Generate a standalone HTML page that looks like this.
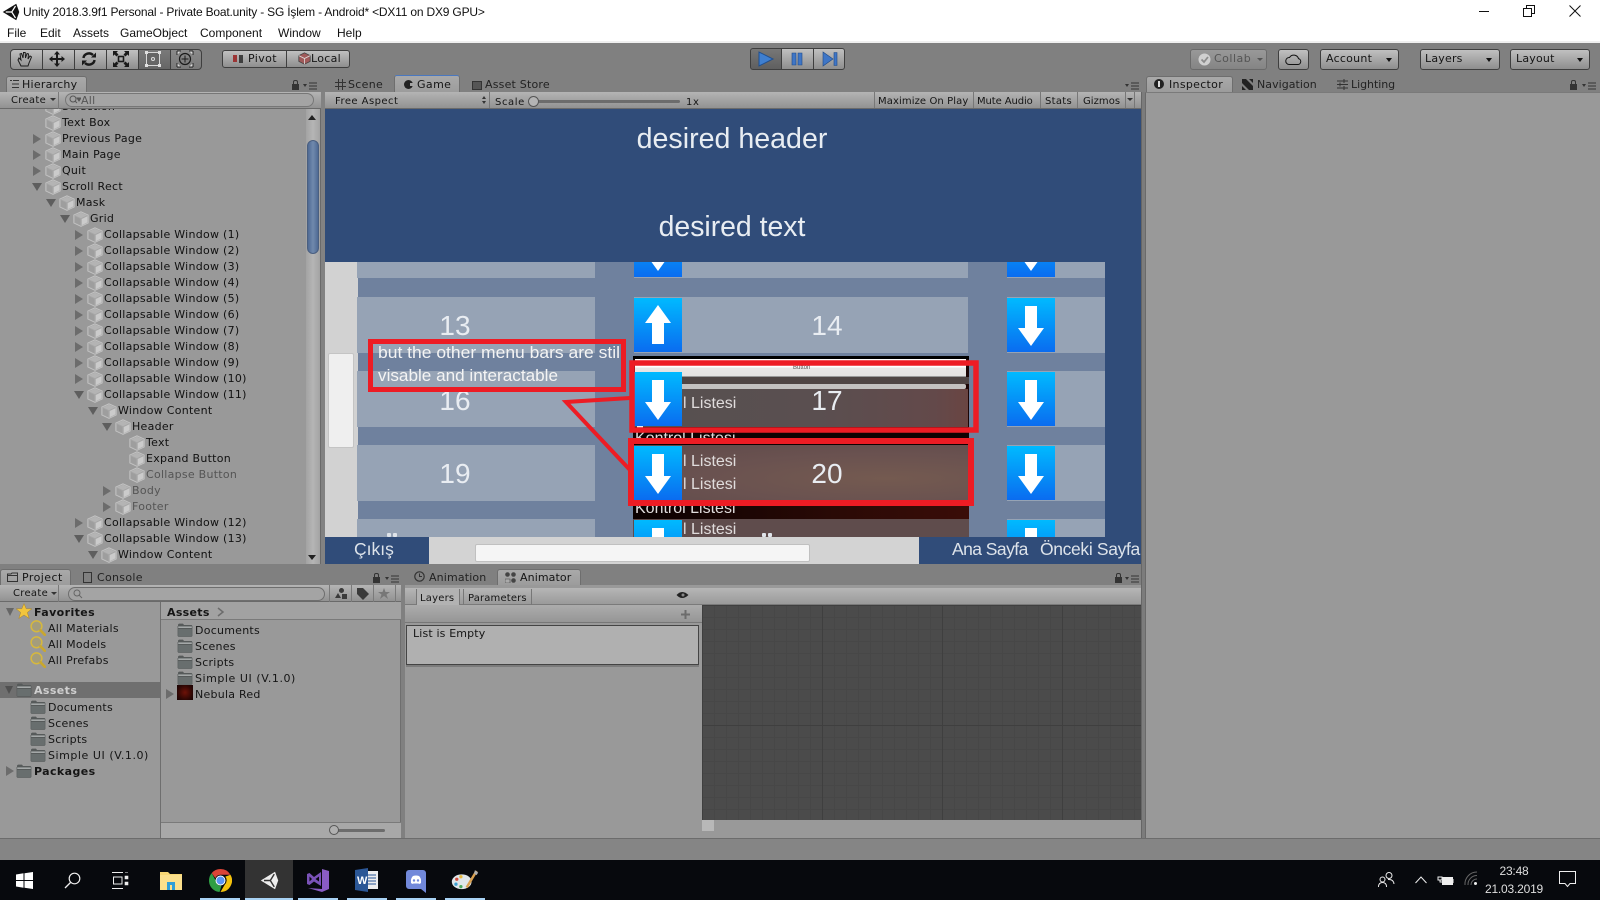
<!DOCTYPE html>
<html><head><meta charset="utf-8"><title>Unity</title>
<style>
html,body{margin:0;padding:0;background:#808080}
#p{position:relative;width:1600px;height:900px;overflow:hidden;background:#808080;font-family:"DejaVu Sans","Liberation Sans",sans-serif;font-size:11px;color:#151515}
#p div,#p svg,#p span{position:absolute;box-sizing:border-box}
.x{white-space:nowrap;line-height:16px;height:16px;margin-top:1px;letter-spacing:.25px}
.w{font-family:"Liberation Sans",sans-serif;font-size:12px;color:#111;margin-top:0;letter-spacing:0}
.r{white-space:nowrap;line-height:16px;height:16px;padding-left:17px;color:#111;margin-top:1px;letter-spacing:.27px}
.r svg{left:0;top:0;width:16px;height:16px}
.g{color:#555}
i.ar,i.ad{position:absolute;width:0;height:0;display:block}
i.ar{left:-12px;top:3px;border-left:8px solid #6c6c6c;border-top:5px solid transparent;border-bottom:5px solid transparent}
i.ad{left:-13px;top:4px;border-top:8px solid #5e5e5e;border-left:5px solid transparent;border-right:5px solid transparent}
.b{background:linear-gradient(#c0c0c0,#8e8e8e);border:1px solid #3f3f3f}
.tab{background:linear-gradient(#a9a9a9,#9c9c9c);border:1px solid #6e6e6e;border-bottom:0;border-radius:3px 3px 0 0}
.tb{background:linear-gradient(#b4b4b4,#929292);border-bottom:1px solid #6a6a6a}
.cell{background:#96a3b5}
.num{color:#e9edf2;font-family:"Liberation Sans",sans-serif;font-size:28px;line-height:34px;height:34px;text-align:center;white-space:nowrap;margin-top:1px}
.btn{width:48px;height:54px;background:linear-gradient(#00baff,#0a6cf0)}
.btn svg{left:0;top:0;width:48px;height:54px}
.li{font-family:"Liberation Sans",sans-serif;font-size:16px;color:#e0dcdc;line-height:20px;height:20px;white-space:nowrap;margin-top:1px}
.bt{font-family:"Liberation Sans",sans-serif;font-size:17.5px;color:#dde3ea;line-height:22px;height:22px;white-space:nowrap}
.ul{top:898px;height:2px;background:#a8d2f4}
.dot{width:4px;height:4px;background:#dfe4ea;border-radius:1px}
</style></head><body>
<div id="p">
<svg width="0" height="0" style="left:0;top:0"><defs>
<symbol id="cube" viewBox="0 0 16 16"><path d="M8 .8 15.200 4V12L8 15.400 .8 12V4Z" fill="#a6a6a6" stroke="#c4c4c4" stroke-width=".9"/><path d="M8 1.800 14 4.400 8 7.200 2 4.400Z" fill="#b4b4b4"/><path d="M8.700 8 14.400 5.300V11.400L8.700 14.200Z" fill="#cbcbcb"/><path d="M2 5.300 7.300 8V14.200L2 11.400Z" fill="#9e9e9e"/></symbol>
<symbol id="fold" viewBox="0 0 16 14"><path d="M1 3V1.500L2 .6H6L7 2H14.600L15.400 3V13L14.600 13.800H1.400L.6 13V3Z" fill="#565a5a"/><path d="M1.200 3.400H14.800V5H1.200Z" fill="#a4a8a8"/><path d="M1.200 6H14.800V13H1.200Z" fill="#686e6e"/></symbol>
<symbol id="mag" viewBox="0 0 16 16"><circle cx="6.500" cy="6.300" r="5.400" fill="#a49d7c" stroke="#d6b83e" stroke-width="1.500"/><path d="M10.500 10.300 14.800 14.800" stroke="#c9a72e" stroke-width="2.600" stroke-linecap="round"/></symbol>
<symbol id="down" viewBox="0 0 48 54"><path d="M18 8H30V30H37L24 48 11 30H18Z" fill="#fff"/></symbol>
<symbol id="up" viewBox="0 0 48 54"><path d="M24 7 37 25H30V46H18V25H11Z" fill="#fff"/></symbol>
</defs></svg>

<!-- title -->
<div style="left:0;top:0;width:1600px;height:41px;background:#fff"></div>
<div style="left:0;top:41px;width:1600px;height:2px;background:#efefef"></div>
<svg style="left:2px;top:3px" width="18" height="18" viewBox="0 0 24 24"><path d="M1 12 19 1 23 12 19 23Z" fill="#111"/><path d="M13 12H5M13 12 18 4M13 12 18 20" stroke="#fff" stroke-width="1.600"/></svg>
<div class="x w" style="left:23px;top:4px;letter-spacing:-.19px">Unity 2018.3.9f1 Personal - Private Boat.unity - SG İşlem - Android* &lt;DX11 on DX9 GPU&gt;</div>
<div class="x w" style="left:7px;top:25px">File</div>
<div class="x w" style="left:40px;top:25px">Edit</div>
<div class="x w" style="left:73px;top:25px">Assets</div>
<div class="x w" style="left:120px;top:25px">GameObject</div>
<div class="x w" style="left:200px;top:25px">Component</div>
<div class="x w" style="left:278px;top:25px">Window</div>
<div class="x w" style="left:337px;top:25px">Help</div>
<div style="left:1479px;top:11px;width:10px;height:1px;background:#111"></div>
<svg style="left:1523px;top:5px" width="12" height="12" viewBox="0 0 12 12"><path d="M.5 3.500H8.500V11.500H.5ZM3.500 3.500V.5H11.500V8.500H8.500" fill="none" stroke="#111"/></svg>
<svg style="left:1569px;top:5px" width="12" height="12" viewBox="0 0 12 12"><path d="M.5.5 11.500 11.500M11.500.5.5 11.500" stroke="#111" fill="none"/></svg>

<!-- toolbar tools -->
<div class="b" style="left:10px;top:49px;width:33px;height:21px;border-radius:4px 0 0 4px"></div>
<div class="b" style="left:42px;top:49px;width:33px;height:21px"></div>
<div class="b" style="left:74px;top:49px;width:33px;height:21px"></div>
<div class="b" style="left:106px;top:49px;width:33px;height:21px"></div>
<div style="left:138px;top:49px;width:33px;height:21px;background:linear-gradient(#7a7a7a,#666);border:1px solid #3f3f3f"></div>
<div style="left:170px;top:49px;width:32px;height:21px;background:linear-gradient(#8a8a8a,#7a7a7a);border:1px solid #3f3f3f;border-radius:0 4px 4px 0"></div>
<svg style="left:16px;top:50px" width="18" height="18" viewBox="0 0 18 18"><path d="M5 16 2 10 3 8 5 10 4 4 5.500 3.500 7 8 7.500 2.500 9.200 2.500 9.500 8 11 3.500 12.500 4 12 9 14 6 15.500 7 13 13 12 16Z" fill="none" stroke="#1c1c1c" stroke-width="1"/></svg>
<svg style="left:48px;top:50px" width="18" height="18" viewBox="0 0 18 18"><path d="M9 1 12 4.500H10V8H13.500V6L17 9 13.500 12V10H10V13.500H12L9 17 6 13.500H8V10H4.500V12L1 9 4.500 6V8H8V4.500H6Z" fill="#1a1a1a"/></svg>
<svg style="left:80px;top:50px" width="18" height="18" viewBox="0 0 18 18"><path d="M3.500 8A5.500 5 0 0 1 13 5M14.500 10A5.500 5 0 0 1 5 13" fill="none" stroke="#1a1a1a" stroke-width="2.400"/><path d="M11 7.500H16V2.500ZM7 10.500H2V15.500Z" fill="#1a1a1a"/></svg>
<svg style="left:112px;top:50px" width="18" height="18" viewBox="0 0 18 18"><path d="M1 1H6L4.500 2.500 6.500 4.500 4.500 6.500 2.500 4.500 1 6ZM17 1V6L15.500 4.500 13.500 6.500 11.500 4.500 13.500 2.500 12 1ZM1 17V12L2.500 13.500 4.500 11.500 6.500 13.500 4.500 15.500 6 17ZM17 17H12L13.500 15.500 11.500 13.500 13.500 11.500 15.500 13.500 17 12Z" fill="#1a1a1a"/><rect x="6.500" y="6.500" width="5" height="5" fill="none" stroke="#1a1a1a" stroke-width="1.600"/></svg>
<svg style="left:144px;top:50px" width="18" height="18" viewBox="0 0 18 18"><rect x="2.500" y="2.500" width="13" height="13" fill="#666" stroke="#d8d8d8"/><path d="M1 1h3v3H1zM14 1h3v3h-3zM1 14h3v3H1zM14 14h3v3h-3z" fill="#e0e0e0"/><circle cx="9" cy="9" r="1.500" fill="none" stroke="#ddd"/></svg>
<svg style="left:176px;top:50px" width="18" height="18" viewBox="0 0 18 18"><circle cx="9" cy="9" r="5.500" fill="none" stroke="#1a1a1a" stroke-width="1.200"/><path d="M9 5.500V12.500M5.500 9H12.500" stroke="#1a1a1a"/><path d="M1 1H5L1 5ZM17 1V5L13 1ZM1 17V13L5 17ZM17 17H13L17 13Z" fill="#ddd"/><path d="M1 1H5M1 1V5M17 1H13M17 1V5M1 17H5M1 17V13M17 17H13M17 17V13" stroke="#222"/></svg>

<div class="b" style="left:222px;top:50px;width:65px;height:18px;border-radius:3px 0 0 3px"></div>
<div class="b" style="left:286px;top:50px;width:64px;height:18px;border-radius:0 3px 3px 0"></div>
<div style="left:233px;top:55px;width:4px;height:7px;background:#9c3535"></div>
<div style="left:239px;top:55px;width:4px;height:8px;background:#3e3e3e"></div>
<div class="x" style="left:248px;top:50px;letter-spacing:.4px">Pivot</div>
<svg style="left:298px;top:52px" width="13" height="13" viewBox="0 0 16 16"><path d="M8 1 15 4.500V11.500L8 15 1 11.500V4.500Z" fill="#a05a5a" stroke="#444"/><path d="M1 4.500 8 8 15 4.500M8 8V15" stroke="#ddd" fill="none"/></svg>
<div class="x" style="left:311px;top:50px;letter-spacing:.3px">Local</div>

<!-- playback -->
<div style="left:750px;top:48px;width:32px;height:22px;background:linear-gradient(#777,#5f5f5f);border:1px solid #3f3f3f;border-radius:3px 0 0 3px"></div>
<div class="b" style="left:781px;top:48px;width:33px;height:22px"></div>
<div class="b" style="left:813px;top:48px;width:32px;height:22px;border-radius:0 3px 3px 0"></div>
<svg style="left:757px;top:51px" width="18" height="16" viewBox="0 0 18 16"><path d="M2 1V15L16 8Z" fill="#3f7fd0" stroke="#1f4f8f"/></svg>
<svg style="left:789px;top:51px" width="16" height="16" viewBox="0 0 16 16"><path d="M3 2H7V14H3ZM9 2H13V14H9Z" fill="#3f76c6" stroke="#1f4a88" stroke-width=".6"/></svg>
<svg style="left:821px;top:51px" width="18" height="16" viewBox="0 0 18 16"><path d="M2 1V15L12 8Z M13 1.500H16V14.500H13Z" fill="#3f76c6" stroke="#1f4a88" stroke-width=".6"/></svg>

<!-- right toolbar -->
<div style="left:1190px;top:49px;width:77px;height:21px;background:linear-gradient(#999,#848484);border:1px solid #6a6a6a;border-radius:3px"></div>
<svg style="left:1198px;top:53px" width="13" height="13" viewBox="0 0 13 13"><circle cx="6.500" cy="6.500" r="6" fill="#d0d0d0"/><path d="M3.500 6.500 6 9 10 4" stroke="#8c8c8c" stroke-width="1.800" fill="none"/></svg>
<div class="x" style="left:1214px;top:50px;color:#555;letter-spacing:.5px">Collab</div>
<div style="left:1257px;top:58px;width:0;height:0;border-top:3px solid #555;border-left:3px solid transparent;border-right:3px solid transparent"></div>
<div class="b" style="left:1278px;top:49px;width:31px;height:21px;border-radius:3px"></div>
<svg style="left:1285px;top:52px" width="17" height="14" viewBox="0 0 17 14"><path d="M4 12.500H13A3 3 0 0 0 13.500 6.600 5 5 0 0 0 4.500 5.500 3.500 3.500 0 0 0 4 12.500Z" fill="none" stroke="#111"/></svg>
<div class="b" style="left:1320px;top:49px;width:79px;height:21px;border-radius:3px"></div>
<div class="x" style="left:1326px;top:50px;letter-spacing:.25px">Account</div>
<div style="left:1386px;top:58px;width:0;height:0;border-top:4px solid #111;border-left:3px solid transparent;border-right:3px solid transparent"></div>
<div class="b" style="left:1420px;top:49px;width:80px;height:21px;border-radius:3px"></div>
<div class="x" style="left:1425px;top:50px;letter-spacing:.2px">Layers</div>
<div style="left:1486px;top:58px;width:0;height:0;border-top:4px solid #111;border-left:3px solid transparent;border-right:3px solid transparent"></div>
<div class="b" style="left:1510px;top:49px;width:80px;height:21px;border-radius:3px"></div>
<div class="x" style="left:1516px;top:50px;letter-spacing:.2px">Layout</div>
<div style="left:1577px;top:58px;width:0;height:0;border-top:4px solid #111;border-left:3px solid transparent;border-right:3px solid transparent"></div>

<!-- tab strip -->
<div class="tab" style="left:6px;top:76px;width:81px;height:16px"></div>
<svg style="left:9px;top:79px" width="11" height="10" viewBox="0 0 11 10"><path d="M1 1.500H3M4 1.500H10M3 5H10M3 8.500H10" stroke="#333"/></svg>
<div class="x" style="left:22px;top:76px;letter-spacing:.25px">Hierarchy</div>
<div style="left:292px;top:84px;width:7px;height:6px;background:#333"></div>
<div style="left:293px;top:80px;width:5px;height:5px;border:1px solid #333;border-bottom:0;border-radius:2px 2px 0 0"></div>
<svg style="left:303px;top:82px" width="14" height="8" viewBox="0 0 14 8"><path d="M0 2 4 2 2 5Z" fill="#333"/><path d="M6 1H14M6 4H14M6 7H14" stroke="#333"/></svg>
<svg style="left:335px;top:79px" width="11" height="11" viewBox="0 0 11 11"><path d="M3.500 0V11M7.500 0V11M0 3.500H11M0 7.500H11" stroke="#333"/></svg>
<div class="x" style="left:348px;top:76px;color:#222;letter-spacing:.3px">Scene</div>
<div class="tab" style="left:394px;top:75px;width:66px;height:17px;border-top:1px solid #4a78c0"></div>
<div style="left:404px;top:80px;width:9px;height:9px;border-radius:50%;background:#222"></div>
<div style="left:410px;top:83px;width:4px;height:3px;background:#a5a5a5"></div>
<div class="x" style="left:417px;top:76px;letter-spacing:.4px">Game</div>
<div style="left:472px;top:81px;width:10px;height:9px;background:#555;border:1px solid #333"></div>
<div class="x" style="left:485px;top:76px;color:#222;letter-spacing:.2px">Asset Store</div>
<svg style="left:1125px;top:82px" width="14" height="8" viewBox="0 0 14 8"><path d="M0 2 4 2 2 5Z" fill="#333"/><path d="M6 1H14M6 4H14M6 7H14" stroke="#333"/></svg>
<div class="tab" style="left:1146px;top:76px;width:87px;height:16px"></div>
<div style="left:1154px;top:79px;width:10px;height:10px;border-radius:50%;background:#222"></div>
<div style="left:1158px;top:81px;width:2px;height:6px;background:#ddd"></div>
<div class="x" style="left:1169px;top:76px;letter-spacing:.3px">Inspector</div>
<svg style="left:1242px;top:79px" width="11" height="11" viewBox="0 0 11 11"><path d="M0 0H4L11 7V11H7L0 4ZM11 0V4L7 0ZM0 11V7L4 11Z" fill="#222"/></svg>
<div class="x" style="left:1257px;top:76px;color:#222;letter-spacing:.05px">Navigation</div>
<svg style="left:1337px;top:79px" width="11" height="11" viewBox="0 0 11 11"><path d="M0 2H11M0 5.500H11M0 9H11M7 0V4M3 3.500V7.500M7 7V11" stroke="#333"/></svg>
<div class="x" style="left:1351px;top:76px;color:#222;letter-spacing:-.05px">Lighting</div>
<div style="left:1570px;top:84px;width:7px;height:6px;background:#333"></div>
<div style="left:1571px;top:80px;width:5px;height:5px;border:1px solid #333;border-bottom:0;border-radius:2px 2px 0 0"></div>
<svg style="left:1582px;top:82px" width="14" height="8" viewBox="0 0 14 8"><path d="M0 2 4 2 2 5Z" fill="#333"/><path d="M6 1H14M6 4H14M6 7H14" stroke="#333"/></svg>

<!-- inspector -->
<div style="left:1145px;top:92px;width:455px;height:746px;background:#999;border-left:1px solid #6a6a6a;border-top:1px solid #7a7a7a"></div>

<!-- hierarchy -->
<div style="left:0;top:92px;width:321px;height:472px;background:#999;overflow:hidden">
<div style="left:0;top:0;width:321px;height:17px;z-index:3" class="tb"></div>
<div style="left:0;top:17px;width:321px;height:455px">
<div class="r" style="left:45px;top:-11px"><svg><use href="#cube"/></svg>Selection</div>
<div class="r" style="left:45px;top:5px"><svg><use href="#cube"/></svg>Text Box</div>
<div class="r" style="left:45px;top:21px"><i class="ar"></i><svg><use href="#cube"/></svg>Previous Page</div>
<div class="r" style="left:45px;top:37px"><i class="ar"></i><svg><use href="#cube"/></svg>Main Page</div>
<div class="r" style="left:45px;top:53px"><i class="ar"></i><svg><use href="#cube"/></svg>Quit</div>
<div class="r" style="left:45px;top:69px"><i class="ad"></i><svg><use href="#cube"/></svg>Scroll Rect</div>
<div class="r" style="left:59px;top:85px"><i class="ad"></i><svg><use href="#cube"/></svg>Mask</div>
<div class="r" style="left:73px;top:101px"><i class="ad"></i><svg><use href="#cube"/></svg>Grid</div>
<div class="r" style="left:87px;top:117px"><i class="ar"></i><svg><use href="#cube"/></svg>Collapsable Window (1)</div>
<div class="r" style="left:87px;top:133px"><i class="ar"></i><svg><use href="#cube"/></svg>Collapsable Window (2)</div>
<div class="r" style="left:87px;top:149px"><i class="ar"></i><svg><use href="#cube"/></svg>Collapsable Window (3)</div>
<div class="r" style="left:87px;top:165px"><i class="ar"></i><svg><use href="#cube"/></svg>Collapsable Window (4)</div>
<div class="r" style="left:87px;top:181px"><i class="ar"></i><svg><use href="#cube"/></svg>Collapsable Window (5)</div>
<div class="r" style="left:87px;top:197px"><i class="ar"></i><svg><use href="#cube"/></svg>Collapsable Window (6)</div>
<div class="r" style="left:87px;top:213px"><i class="ar"></i><svg><use href="#cube"/></svg>Collapsable Window (7)</div>
<div class="r" style="left:87px;top:229px"><i class="ar"></i><svg><use href="#cube"/></svg>Collapsable Window (8)</div>
<div class="r" style="left:87px;top:245px"><i class="ar"></i><svg><use href="#cube"/></svg>Collapsable Window (9)</div>
<div class="r" style="left:87px;top:261px"><i class="ar"></i><svg><use href="#cube"/></svg>Collapsable Window (10)</div>
<div class="r" style="left:87px;top:277px"><i class="ad"></i><svg><use href="#cube"/></svg>Collapsable Window (11)</div>
<div class="r" style="left:101px;top:293px"><i class="ad"></i><svg><use href="#cube"/></svg>Window Content</div>
<div class="r" style="left:115px;top:309px"><i class="ad"></i><svg><use href="#cube"/></svg>Header</div>
<div class="r" style="left:129px;top:325px"><svg><use href="#cube"/></svg>Text</div>
<div class="r" style="left:129px;top:341px"><svg><use href="#cube"/></svg>Expand Button</div>
<div class="r g" style="left:129px;top:357px"><svg><use href="#cube"/></svg>Collapse Button</div>
<div class="r g" style="left:115px;top:373px"><i class="ar"></i><svg><use href="#cube"/></svg>Body</div>
<div class="r g" style="left:115px;top:389px"><i class="ar"></i><svg><use href="#cube"/></svg>Footer</div>
<div class="r" style="left:87px;top:405px"><i class="ar"></i><svg><use href="#cube"/></svg>Collapsable Window (12)</div>
<div class="r" style="left:87px;top:421px"><i class="ad"></i><svg><use href="#cube"/></svg>Collapsable Window (13)</div>
<div class="r" style="left:101px;top:437px"><i class="ad"></i><svg><use href="#cube"/></svg>Window Content</div>
</div>
</div>
<div class="x" style="left:11px;top:92px;z-index:4;font-size:10px;letter-spacing:.3px">Create</div>
<div style="left:50px;top:98px;z-index:4;width:0;height:0;border-top:3px solid #333;border-left:3px solid transparent;border-right:3px solid transparent"></div>
<div style="left:58px;top:92px;width:1px;height:17px;background:#7a7a7a;z-index:4"></div>
<div style="left:65px;top:93px;width:249px;height:14px;border:1px solid #777;border-radius:8px;background:#a4a4a4;z-index:4"></div>
<div class="x" style="left:81px;top:92px;color:#555;z-index:5">All</div>
<svg style="left:69px;top:95px;z-index:5" width="12" height="10" viewBox="0 0 12 10"><circle cx="4" cy="4" r="3" fill="none" stroke="#555"/><path d="M6 6 8 8M8 3H12L10 6Z" stroke="#555" fill="#555"/></svg>
<div style="left:306px;top:109px;width:14px;height:455px;background:linear-gradient(90deg,#a3a3a3,#b5b5b5,#a3a3a3)"></div>
<div style="left:308px;top:115px;z-index:2;width:0;height:0;border-bottom:5px solid #222;border-left:4px solid transparent;border-right:4px solid transparent"></div>
<div style="left:307px;top:140px;width:12px;height:114px;border-radius:6px;background:linear-gradient(90deg,#4f6a94,#7089ad,#4f6a94);border:1px solid #4a5f80"></div>
<div style="left:308px;top:555px;width:0;height:0;border-top:5px solid #222;border-left:4px solid transparent;border-right:4px solid transparent"></div>
<div style="left:320px;top:92px;width:5px;height:472px;background:#828282;border-left:1px solid #6a6a6a"></div>

<!-- game toolbar -->
<div class="tb" style="left:325px;top:92px;width:816px;height:17px"></div>
<div class="x" style="left:335px;top:93px;letter-spacing:.45px;font-size:10px">Free Aspect</div>
<div style="left:482px;top:96px;width:0;height:0;border-bottom:3px solid #333;border-left:2px solid transparent;border-right:2px solid transparent"></div>
<div style="left:482px;top:101px;width:0;height:0;border-top:3px solid #333;border-left:2px solid transparent;border-right:2px solid transparent"></div>
<div style="left:489px;top:92px;width:1px;height:16px;background:#777"></div>
<div class="x" style="left:495px;top:94px;letter-spacing:.6px;font-size:10px">Scale</div>
<div style="left:532px;top:100px;width:148px;height:3px;border-radius:2px;background:#6c6c6c"></div>
<div style="left:528px;top:96px;width:11px;height:11px;border-radius:50%;background:#b4b4b4;border:1px solid #555"></div>
<div class="x" style="left:686px;top:94px;font-size:10px;letter-spacing:.6px">1x</div>
<div style="left:874px;top:92px;width:1px;height:16px;background:#777"></div>
<div class="x" style="left:878px;top:93px;font-size:10px;letter-spacing:.1px">Maximize On Play</div>
<div style="left:973px;top:92px;width:1px;height:16px;background:#777"></div>
<div class="x" style="left:977px;top:93px;font-size:10px;letter-spacing:-.1px">Mute Audio</div>
<div style="left:1040px;top:92px;width:1px;height:16px;background:#777"></div>
<div class="x" style="left:1045px;top:93px;font-size:10px;letter-spacing:.3px">Stats</div>
<div style="left:1077px;top:92px;width:1px;height:16px;background:#777"></div>
<div class="x" style="left:1083px;top:93px;font-size:10px;letter-spacing:.05px">Gizmos</div>
<div style="left:1125px;top:92px;width:1px;height:16px;background:#777"></div>
<div style="left:1127px;top:98px;width:0;height:0;border-top:3px solid #333;border-left:3px solid transparent;border-right:3px solid transparent"></div>
<div style="left:1134px;top:92px;width:1px;height:16px;background:#777"></div>

<!-- game view -->
<div style="left:325px;top:109px;width:816px;height:455px;background:#304c79;overflow:hidden" id="game">
<div style="left:0;width:816px;top:13px;text-align:center;font-family:'Liberation Sans',sans-serif;font-size:28.6px;line-height:34px;color:#e8edf2;padding-right:2px">desired header</div>
<div style="left:0;width:816px;top:101px;text-align:center;font-family:'Liberation Sans',sans-serif;font-size:28.4px;line-height:34px;color:#e8edf2;padding-right:2px">desired text</div>
</div>
<div style="left:325px;top:262px;width:780px;height:275px;background:#6f819e;overflow:hidden">
 <div style="left:0;top:0;width:33px;height:275px;background:#d2d2d2"></div>
 <div style="left:3px;top:91px;width:26px;height:95px;background:#efefef;border:1px solid #c4c4c4;border-radius:2px"></div>
 <div class="cell" style="left:32px;top:-38px;width:238px;height:54px"></div>
 <div class="cell" style="left:32px;top:35px;width:238px;height:56px"></div>
 <div class="cell" style="left:32px;top:109px;width:238px;height:56px"></div>
 <div class="cell" style="left:32px;top:183px;width:238px;height:56px"></div>
 <div class="cell" style="left:32px;top:257px;width:238px;height:56px"></div>
 <div class="cell" style="left:309px;top:-38px;width:334px;height:54px"></div>
 <div class="cell" style="left:309px;top:35px;width:334px;height:56px"></div>
 <div class="cell" style="left:682px;top:-38px;width:98px;height:54px"></div>
 <div class="cell" style="left:682px;top:35px;width:98px;height:56px"></div>
 <div class="cell" style="left:682px;top:109px;width:98px;height:56px"></div>
 <div class="cell" style="left:682px;top:183px;width:98px;height:56px"></div>
 <div class="cell" style="left:682px;top:257px;width:98px;height:56px"></div>
 <div class="num" style="left:34px;top:46px;width:192px">13</div>
 <div class="num" style="left:34px;top:121px;width:192px">16</div>
 <div class="num" style="left:34px;top:194px;width:192px">19</div>
 <div class="dot" style="left:62px;top:271px"></div>
 <div class="dot" style="left:68px;top:271px"></div>
 <!-- nebula -->
 <div style="left:308px;top:94px;width:336px;height:181px;background:#1c0505;overflow:hidden">
  <div style="left:0;top:0;width:336px;height:3px;background:#000"></div>
  <div style="left:2px;top:3px;width:331px;height:18px;background:linear-gradient(#fff 0,#fff 50%,#e9e7e6 50%,#e4e2e1);border-bottom:1px solid #999"></div>
  <div style="left:0;top:21px;width:336px;height:7px;background:#4f4544"></div>
  <div style="left:2px;top:28px;width:331px;height:5px;background:#c3c1c0;border-radius:2px"></div>
  <div style="left:0;top:33px;width:335px;height:38px;background:linear-gradient(90deg,#565050,#5a4f50 55%,#63494a 90%,#6a4542)"></div>
  <div style="left:0;top:71px;width:336px;height:18px;background:#100202"></div>
  <div style="left:0;top:89px;width:336px;height:56px;background:radial-gradient(ellipse at 75% 60%,#745a50,#6a5250 50%,#5f4a4a)"></div>
  <div style="left:0;top:145px;width:336px;height:18px;background:linear-gradient(90deg,#0a0000,#2a0a06 60%,#3a0d08)"></div>
  <div style="left:0;top:163px;width:336px;height:18px;background:#5f4c4c"></div>
  <div style="left:4px;top:70px;width:6px;height:2px;background:#eee"></div>
  <div class="li" style="left:2px;top:75px;height:8px;overflow:hidden;line-height:15px;margin:0">Kontrol Listesi</div>
  <div class="li" style="left:2px;top:147px;height:11px;overflow:hidden;line-height:10px">Kontrol Listesi</div>
  <div class="li" style="left:50px;top:37px">l Listesi</div>
  <div class="li" style="left:50px;top:95px">l Listesi</div>
  <div class="li" style="left:50px;top:118px">l Listesi</div>
  <div class="li" style="left:50px;top:163px">l Listesi</div>
 </div>
 <div style="left:468px;top:102px;font-family:'Liberation Sans',sans-serif;font-size:6px;line-height:8px;color:#555">Button</div>
 <div class="num" style="left:470px;top:46px;width:64px">14</div>
 <div class="num" style="left:470px;top:121px;width:64px">17</div>
 <div class="num" style="left:470px;top:194px;width:64px">20</div>
 <div class="dot" style="left:437px;top:271px"></div>
 <div class="dot" style="left:443px;top:271px"></div>
 <div class="btn" style="left:309px;top:-39px"><svg><use href="#down"/></svg></div>
 <div class="btn" style="left:309px;top:36px"><svg><use href="#up"/></svg></div>
 <div class="btn" style="left:309px;top:110px"><svg><use href="#down"/></svg></div>
 <div class="btn" style="left:309px;top:184px"><svg><use href="#down"/></svg></div>
 <div class="btn" style="left:309px;top:258px"><svg><use href="#down"/></svg></div>
 <div class="btn" style="left:682px;top:-39px"><svg><use href="#down"/></svg></div>
 <div class="btn" style="left:682px;top:36px"><svg><use href="#down"/></svg></div>
 <div class="btn" style="left:682px;top:110px"><svg><use href="#down"/></svg></div>
 <div class="btn" style="left:682px;top:184px"><svg><use href="#down"/></svg></div>
 <div class="btn" style="left:682px;top:258px"><svg><use href="#down"/></svg></div>
</div>
<!-- bottom of game -->
<div style="left:429px;top:537px;width:490px;height:27px;background:#d3d3d3"></div>
<div style="left:475px;top:544px;width:335px;height:18px;background:#f5f5f5;border:1px solid #c0c0c0;border-radius:2px"></div>
<div class="bt" style="left:354px;top:538px">Çıkış</div>
<div class="bt" style="left:952px;top:538px;letter-spacing:-.55px">Ana Sayfa</div>
<div class="bt" style="left:1040px;top:538px;letter-spacing:-.35px">Önceki Sayfa</div>

<!-- annotation -->
<svg style="left:0;top:0" width="1600" height="900" viewBox="0 0 1600 900">
<rect x="370.500" y="341.500" width="253" height="48" fill="none" stroke="#ed1c24" stroke-width="5"/>
<rect x="632" y="363" width="344" height="67" fill="none" stroke="#ed1c24" stroke-width="5.500"/>
<rect x="631" y="441" width="340" height="62" fill="none" stroke="#ed1c24" stroke-width="6"/>
<path d="M630 398 566 402 630 470" fill="none" stroke="#ed1c24" stroke-width="4"/>
<text x="378" y="358" font-family="'Liberation Sans',sans-serif" font-size="17" fill="#f4f4f4" textLength="242" lengthAdjust="spacingAndGlyphs">but the other menu bars are stil</text>
<text x="378" y="381" font-family="'Liberation Sans',sans-serif" font-size="17" fill="#f4f4f4" textLength="180" lengthAdjust="spacingAndGlyphs">visable and interactable</text>
</svg>

<!-- project panel -->
<div style="left:0;top:564px;width:1145px;height:5px;background:#808080"></div>
<div class="tab" style="left:0;top:569px;width:71px;height:16px"></div>
<svg style="left:7px;top:572px" width="11" height="10" viewBox="0 0 11 10"><path d="M.5 2H4L5 1H10.500V9.500H.5Z" fill="none" stroke="#333"/><path d="M.5 3.500H10.500" stroke="#333"/></svg>
<div class="x" style="left:22px;top:569px;letter-spacing:.45px">Project</div>
<div style="left:83px;top:572px;width:9px;height:11px;border:1px solid #333"></div>
<div class="x" style="left:97px;top:569px;color:#222;letter-spacing:.3px">Console</div>
<div style="left:373px;top:577px;width:7px;height:6px;background:#333"></div>
<div style="left:374px;top:573px;width:5px;height:5px;border:1px solid #333;border-bottom:0;border-radius:2px 2px 0 0"></div>
<svg style="left:385px;top:575px" width="14" height="8" viewBox="0 0 14 8"><path d="M0 2 4 2 2 5Z" fill="#333"/><path d="M6 1H14M6 4H14M6 7H14" stroke="#333"/></svg>
<div style="left:0;top:585px;width:401px;height:253px;background:#999;border-right:1px solid #6e6e6e"></div>
<div class="tb" style="left:0;top:585px;width:401px;height:17px"></div>
<div class="x" style="left:13px;top:585px;font-size:10px;letter-spacing:.3px">Create</div>
<div style="left:51px;top:592px;width:0;height:0;border-top:3px solid #333;border-left:3px solid transparent;border-right:3px solid transparent"></div>
<div style="left:58px;top:585px;width:1px;height:17px;background:#7a7a7a"></div>
<div style="left:68px;top:587px;width:257px;height:14px;border:1px solid #6e6e6e;border-radius:8px;background:#a4a4a4"></div>
<svg style="left:73px;top:589px" width="10" height="10" viewBox="0 0 10 10"><circle cx="4" cy="4" r="3" fill="none" stroke="#666"/><path d="M6 6 9 9" stroke="#666"/></svg>
<div style="left:329px;top:585px;width:1px;height:17px;background:#7a7a7a"></div>
<svg style="left:335px;top:588px" width="12" height="11" viewBox="0 0 12 11"><path d="M6.500 0a2.500 2.500 0 1 1 0 5 2.500 2.500 0 0 1 0-5ZM0 10 3 5 6 10ZM7 6H12V11H7Z" fill="#3a3a3a"/></svg>
<div style="left:351px;top:585px;width:1px;height:17px;background:#7a7a7a"></div>
<svg style="left:357px;top:588px" width="12" height="12" viewBox="0 0 12 12"><path d="M0 0H6L12 6 6 12 0 6Z" fill="#3a3a3a"/></svg>
<div style="left:373px;top:585px;width:1px;height:17px;background:#7a7a7a"></div>
<svg style="left:378px;top:588px" width="12" height="11" viewBox="0 0 12 11"><path d="M6 0 7.500 4H12L8.500 6.500 10 11 6 8 2 11 3.500 6.500 0 4H4.500Z" fill="#777"/></svg>
<div style="left:395px;top:585px;width:1px;height:17px;background:#7a7a7a"></div>
<div style="left:160px;top:602px;width:1px;height:236px;background:#6e6e6e"></div>
<div style="left:161px;top:602px;width:240px;height:18px;background:#a2a2a2;border-bottom:1px solid #7a7a7a"></div>
<div style="left:161px;top:822px;width:240px;height:16px;background:#a8a8a8;border-top:1px solid #7a7a7a"></div>
<div style="left:0;top:682px;width:160px;height:16px;background:#6f6f6f"></div>

<div style="left:6px;top:608px;width:0;height:0;border-top:8px solid #666;border-left:4px solid transparent;border-right:4px solid transparent"></div>
<svg style="left:16px;top:603px" width="16" height="16" viewBox="0 0 16 16"><path d="M8 .5 10.200 5.800H15.800L11.300 9.500 13.200 15.500 8 12 2.800 15.500 4.700 9.500 .2 5.800H5.800Z" fill="#f2c53d" stroke="#a8842a" stroke-width=".5"/></svg>
<div class="x" style="left:34px;top:604px;font-weight:bold;letter-spacing:.4px">Favorites</div>
<svg style="left:30px;top:620px" width="16" height="16"><use href="#mag"/></svg>
<div class="x" style="left:48px;top:620px">All Materials</div>
<svg style="left:30px;top:636px" width="16" height="16"><use href="#mag"/></svg>
<div class="x" style="left:48px;top:636px">All Models</div>
<svg style="left:30px;top:652px" width="16" height="16"><use href="#mag"/></svg>
<div class="x" style="left:48px;top:652px">All Prefabs</div>

<div style="left:5px;top:686px;width:0;height:0;border-top:8px solid #505050;border-left:4.500px solid transparent;border-right:4.500px solid transparent"></div>
<svg style="left:16px;top:683px" width="16" height="14"><use href="#fold"/></svg>
<div class="x" style="left:34px;top:682px;font-weight:bold;letter-spacing:.4px;color:#cfcfcf">Assets</div>
<svg style="left:30px;top:700px" width="16" height="14"><use href="#fold"/></svg>
<div class="x" style="left:48px;top:699px">Documents</div>
<svg style="left:30px;top:716px" width="16" height="14"><use href="#fold"/></svg>
<div class="x" style="left:48px;top:715px">Scenes</div>
<svg style="left:30px;top:732px" width="16" height="14"><use href="#fold"/></svg>
<div class="x" style="left:48px;top:731px">Scripts</div>
<svg style="left:30px;top:748px" width="16" height="14"><use href="#fold"/></svg>
<div class="x" style="left:48px;top:747px;letter-spacing:.55px">Simple UI (V.1.0)</div>
<div style="left:6px;top:766px;width:0;height:0;border-left:8px solid #6c6c6c;border-top:5px solid transparent;border-bottom:5px solid transparent"></div>
<svg style="left:16px;top:764px" width="16" height="14"><use href="#fold"/></svg>
<div class="x" style="left:34px;top:763px;font-weight:bold;letter-spacing:.4px">Packages</div>

<div class="x" style="left:167px;top:604px;font-weight:bold;letter-spacing:.3px">Assets</div>
<svg style="left:217px;top:607px" width="8" height="10" viewBox="0 0 8 10"><path d="M1 1 6 5 1 9" fill="none" stroke="#6c6c6c" stroke-width="1.500"/></svg>
<svg style="left:177px;top:623px" width="16" height="14"><use href="#fold"/></svg>
<div class="x" style="left:195px;top:622px">Documents</div>
<svg style="left:177px;top:639px" width="16" height="14"><use href="#fold"/></svg>
<div class="x" style="left:195px;top:638px">Scenes</div>
<svg style="left:177px;top:655px" width="16" height="14"><use href="#fold"/></svg>
<div class="x" style="left:195px;top:654px">Scripts</div>
<svg style="left:177px;top:671px" width="16" height="14"><use href="#fold"/></svg>
<div class="x" style="left:195px;top:670px;letter-spacing:.55px">Simple UI (V.1.0)</div>
<div style="left:166px;top:689px;width:0;height:0;border-left:8px solid #6c6c6c;border-top:5px solid transparent;border-bottom:5px solid transparent"></div>
<div style="left:177px;top:685px;width:16px;height:15px;background:radial-gradient(circle at 50% 50%,#6e1208,#2a0604 70%,#180303)"></div>
<div class="x" style="left:195px;top:686px">Nebula Red</div>
<div style="left:334px;top:829px;width:51px;height:3px;background:#6c6c6c;border-radius:2px"></div>
<div style="left:329px;top:825px;width:10px;height:10px;border-radius:50%;background:#b0b0b0;border:1px solid #555"></div>

<!-- animator -->
<div style="left:401px;top:569px;width:4px;height:269px;background:#808080"></div>
<svg style="left:414px;top:571px" width="11" height="11" viewBox="0 0 11 11"><circle cx="5.500" cy="5.500" r="4.700" fill="none" stroke="#333" stroke-width="1.200"/><path d="M5.500 2.500V5.500H8" fill="none" stroke="#333"/></svg>
<div class="x" style="left:429px;top:569px;color:#222;letter-spacing:.15px">Animation</div>
<div class="tab" style="left:497px;top:569px;width:84px;height:16px"></div>
<svg style="left:505px;top:572px" width="11" height="11" viewBox="0 0 11 11"><circle cx="2.500" cy="2.500" r="2.300" fill="#444"/><circle cx="8.500" cy="2.500" r="2.300" fill="#444"/><circle cx="8.500" cy="8.500" r="2.300" fill="#444"/><path d="M0 7H5V11H0Z" fill="#aaa" stroke="#444" stroke-width=".6"/></svg>
<div class="x" style="left:520px;top:569px;letter-spacing:.1px">Animator</div>
<div style="left:1115px;top:577px;width:7px;height:6px;background:#333"></div>
<div style="left:1116px;top:573px;width:5px;height:5px;border:1px solid #333;border-bottom:0;border-radius:2px 2px 0 0"></div>
<svg style="left:1125px;top:575px" width="14" height="8" viewBox="0 0 14 8"><path d="M0 2 4 2 2 5Z" fill="#333"/><path d="M6 1H14M6 4H14M6 7H14" stroke="#333"/></svg>
<div style="left:405px;top:585px;width:736px;height:253px;background:#999"></div>
<div style="left:405px;top:588px;width:736px;height:17px;background:linear-gradient(#b6b6b6,#9a9a9a);border-bottom:1px solid #7a7a7a"></div>
<div style="left:416px;top:589px;width:44px;height:16px;background:#b2b2b2;border-right:1px solid #777;border-left:1px solid #777"></div>
<div style="left:463px;top:589px;width:69px;height:16px;border-right:1px solid #777;border-left:1px solid #777"></div>
<div class="x" style="left:420px;top:590px;font-size:10px;letter-spacing:.2px">Layers</div>
<div class="x" style="left:468px;top:590px;font-size:10px;letter-spacing:.15px">Parameters</div>
<svg style="left:676px;top:591px" width="13" height="10" viewBox="0 0 13 10"><path d="M.5 4Q6 -2 12.500 4 6 10 .5 4Z" fill="#222"/><circle cx="7" cy="4" r="1.500" fill="#888"/></svg>
<div style="left:405px;top:605px;width:297px;height:18px;background:linear-gradient(#acacac,#969696);border-bottom:1px solid #777"></div>
<svg style="left:681px;top:610px" width="9" height="9" viewBox="0 0 9 9"><path d="M4.500 0V9M0 4.500H9" stroke="#6c6c6c" stroke-width="2"/></svg>
<div style="left:406px;top:625px;width:293px;height:40px;background:#b0b0b0;border:1px solid #444;box-shadow:0 2px 0 #7c7c7c"></div>
<div class="x" style="left:413px;top:625px;letter-spacing:.15px">List is Empty</div>
<div style="left:702px;top:605px;width:439px;height:215px;background-color:#4b4b4b;background-image:linear-gradient(#3f3f3f 1px,transparent 1px),linear-gradient(90deg,#3f3f3f 1px,transparent 1px),linear-gradient(#474747 1px,transparent 1px),linear-gradient(90deg,#474747 1px,transparent 1px);background-size:120px 120px,120px 120px,12px 12px,12px 12px"></div>
<div style="left:702px;top:820px;width:12px;height:11px;background:#b8b8b8"></div>
<div style="left:1141px;top:569px;width:4px;height:269px;background:#7c7c7c;border-left:1px solid #666"></div>
<div style="left:1141px;top:92px;width:4px;height:477px;background:#7c7c7c;border-left:1px solid #666"></div>

<!-- status -->
<div style="left:0;top:838px;width:1600px;height:22px;background:#858585;border-top:1px solid #6c6c6c"></div>

<!-- taskbar -->
<div style="left:0;top:860px;width:1600px;height:40px;background:#07090d"></div>
<div style="left:245px;top:860px;width:48px;height:40px;background:#333"></div>
<svg style="left:16px;top:872px" width="17" height="17" viewBox="0 0 17 17"><path d="M0 2.500 7.500 1.300V8H0ZM8.500 1.200 17 0V8H8.500ZM0 9H7.500V15.700L0 14.500ZM8.500 9H17V17L8.500 15.800Z" fill="#fff"/></svg>
<svg style="left:64px;top:872px" width="17" height="17" viewBox="0 0 17 17"><circle cx="10.500" cy="6.500" r="5.300" fill="none" stroke="#eee" stroke-width="1.200"/><path d="M6.500 10.500 1 16" stroke="#eee" stroke-width="1.300"/></svg>
<svg style="left:112px;top:872px" width="17" height="17" viewBox="0 0 17 17"><path d="M0 .5H11M0 16.500H11M1.500 5H10V12H1.500Z" fill="none" stroke="#eee"/><path d="M13 .5H16M13 4H16V7H13ZM13 10H16V13H13Z" fill="#eee" stroke="#eee" stroke-width=".6"/></svg>
<svg style="left:160px;top:871px" width="22" height="19" viewBox="0 0 22 19"><path d="M0 1H8L10 3H22V19H0Z" fill="#f7d774"/><path d="M0 4H22V19H0Z" fill="#fbe08c"/><path d="M7 11H15V19H12V14H10V19H7Z" fill="#2f9fd8"/></svg>
<svg style="left:209px;top:869px" width="23" height="23" viewBox="0 0 24 24"><path d="M12 0A12 12 0 0 1 22.400 6H12A6 6 0 0 0 6.600 9.500L2.800 4.300A12 12 0 0 1 12 0Z" fill="#db4437"/><path d="M22.400 6A12 12 0 0 1 12 24L16.500 16.200A6 6 0 0 0 17 8Z" fill="#f4c20d"/><path d="M2.800 4.300 7 12A5.500 5.500 0 0 0 13 17.500L11 24A12 12 0 0 1 2.800 4.300Z" fill="#2f9e44"/><circle cx="12" cy="12" r="4.700" fill="#5a95f5" stroke="#fff" stroke-width="1"/></svg>
<svg style="left:259px;top:871px" width="21" height="19" viewBox="0 0 24 24"><path d="M1 12 19 1 23 12 19 23Z" fill="#eee"/><path d="M13 12H5M13 12 18 4M13 12 18 20" stroke="#333" stroke-width="1.800"/></svg>
<svg style="left:306px;top:868px" width="24" height="25" viewBox="0 0 24 25"><path d="M16 1 23 3V21L16 24 2 20 16 21Z" fill="#8a5cc4"/><path d="M1 6 3.500 5 8 9 15 4V18L8 13.500 3.500 17 1 16ZM3.500 8.500V13.500L6 11ZM9.500 11 13 13.500V8.500Z" fill="#7a52b8"/></svg>
<svg style="left:355px;top:868px" width="24" height="24" viewBox="0 0 24 24"><path d="M9 3H23V21H9Z" fill="#eee"/><path d="M11 7H21M11 10H21M11 13H21M11 16H21" stroke="#2b5796"/><path d="M0 2 13 0V24L0 22Z" fill="#2b5796"/><text x="2" y="16" font-family="Liberation Sans,sans-serif" font-size="11" font-weight="bold" fill="#fff">W</text></svg>
<svg style="left:406px;top:870px" width="20" height="23" viewBox="0 0 20 23"><path d="M3 0H17A3 3 0 0 1 20 3V23L15 19H3A3 3 0 0 1 0 16V3A3 3 0 0 1 3 0Z" fill="#7289da"/><path d="M5 13Q4.500 8 7 6 10 5 13 6 15.500 8 15 13 13.500 14.500 12.500 13.500H7.500Q6.500 14.500 5 13Z" fill="#fff"/><circle cx="8" cy="10.500" r="1.200" fill="#7289da"/><circle cx="12" cy="10.500" r="1.200" fill="#7289da"/></svg>
<svg style="left:451px;top:868px" width="28" height="25" viewBox="0 0 34 25"><ellipse cx="13" cy="14" rx="12" ry="9" fill="#dfe6ea"/><circle cx="7" cy="11" r="2" fill="#d24c3c"/><circle cx="12" cy="8" r="2" fill="#e8b93c"/><circle cx="6" cy="17" r="2" fill="#3a9fd0"/><circle cx="12" cy="20" r="2" fill="#4aa85c"/><path d="M31 1 19 21" stroke="#d9a050" stroke-width="3"/><path d="M29 0 33 3 31 6 28 4Z" fill="#b0b0b0"/></svg>
<div class="ul" style="left:200px;width:40px"></div>
<div class="ul" style="left:245px;width:48px"></div>
<div class="ul" style="left:298px;width:40px"></div>
<div class="ul" style="left:347px;width:40px"></div>
<div class="ul" style="left:396px;width:40px"></div>
<div class="ul" style="left:445px;width:40px"></div>
<!-- tray -->
<svg style="left:1378px;top:871px" width="17" height="17" viewBox="0 0 17 17"><circle cx="11" cy="4.500" r="3" fill="none" stroke="#eee"/><circle cx="4.500" cy="8.500" r="2.500" fill="none" stroke="#eee"/><path d="M.5 16Q.5 11.500 4.500 11.500 8.500 11.500 8.500 16M10 8.500Q15.500 8 16 13" fill="none" stroke="#eee"/></svg>
<svg style="left:1415px;top:876px" width="12" height="8" viewBox="0 0 12 8"><path d="M.5 7 6 1 11.500 7" fill="none" stroke="#eee"/></svg>
<svg style="left:1437px;top:875px" width="17" height="11" viewBox="0 0 17 11"><path d="M1 2H5V5H1ZM3 5V7H7" fill="none" stroke="#eee"/><rect x="5.500" y="2.500" width="10" height="7" fill="#eee" stroke="#eee"/><path d="M16 4V8" stroke="#eee"/></svg>
<svg style="left:1464px;top:871px" width="14" height="15" viewBox="0 0 14 15"><path d="M1 14A12 12 0 0 1 13 1M4 14A9 9 0 0 1 13 4.500M7 14A6 6 0 0 1 13 8" fill="none" stroke="#666"/><circle cx="11.500" cy="12.500" r="1.500" fill="#eee"/></svg>
<div style="left:1460px;top:863px;width:108px;text-align:center;font-family:'Liberation Sans',sans-serif;font-size:12px;line-height:16px;color:#dfdfdf;letter-spacing:-.2px">23:48</div>
<div style="left:1460px;top:881px;width:108px;text-align:center;font-family:'Liberation Sans',sans-serif;font-size:12px;line-height:16px;color:#dfdfdf;letter-spacing:-.2px">21.03.2019</div>
<svg style="left:1559px;top:871px" width="17" height="17" viewBox="0 0 17 17"><path d="M.5 .5H16.500V12.500H11L8.500 15.500 6 12.500H.5Z" fill="none" stroke="#eee"/></svg>
</div>
</body></html>
